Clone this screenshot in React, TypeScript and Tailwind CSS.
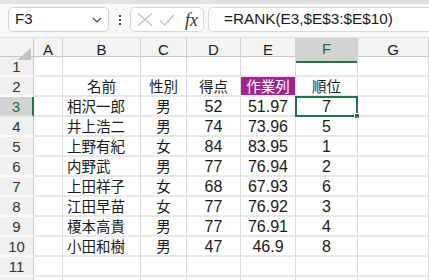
import React from "react";

type Row = {
  name: string;
  sex: string;
  score: string;
  work: string;
  rank: string;
};

const rows: Row[] = [
  { name: "相沢一郎", sex: "男", score: "52", work: "51.97", rank: "7" },
  { name: "井上浩二", sex: "男", score: "74", work: "73.96", rank: "5" },
  { name: "上野有紀", sex: "女", score: "84", work: "83.95", rank: "1" },
  { name: "内野武", sex: "男", score: "77", work: "76.94", rank: "2" },
  { name: "上田祥子", sex: "女", score: "68", work: "67.93", rank: "6" },
  { name: "江田早苗", sex: "女", score: "77", work: "76.92", rank: "3" },
  { name: "榎本高貴", sex: "男", score: "77", work: "76.91", rank: "4" },
  { name: "小田和樹", sex: "男", score: "47", work: "46.9", rank: "8" },
];

const cols = ["A", "B", "C", "D", "E", "F", "G"];

const font = { fontFamily: '"Liberation Sans", "Noto Sans CJK JP", sans-serif' };

const gridCols = "grid grid-cols-[34px_29px_78px_46px_54px_55px_62px_1fr]";

const cell = "h-[20px] pt-[2px] border-r border-b-2 border-r-[#dadada] border-b-[#e8e8e8] flex items-center text-[#1a1a1a]";

const RowHead = ({ n, selected }: { n?: number; selected?: boolean }) => (
  <div
    className={
      "h-[20px] pt-[2px] flex items-center justify-center text-[15px] border-b-2 " +
      (selected
        ? "bg-[#d3d3d3] border-b-[#e4e4e4] border-r-2 border-r-[#217346] text-[#1e6b41]"
        : "bg-[#f0f0f0] border-b-[#fafafa] border-r border-r-[#c8c8c8] text-[#333]")
    }
  >
    {n}
  </div>
);

const Jp = ({ children }: { children: React.ReactNode }) => (
  <span className="text-[14.5px] leading-none">{children}</span>
);

const Num = ({ children }: { children: React.ReactNode }) => (
  <span className="text-[16px] leading-none">{children}</span>
);

export default function App() {
  return (
    <div className="w-[429px] h-[280px] overflow-hidden bg-white" style={font}>
      {/* top strip */}
      <div className="h-[4px] bg-[#e2e2e2]" />

      {/* formula bar */}
      <div className="h-[34px] bg-[#f8f8f8] flex items-start pt-[3px] border-b border-[#e0e0e0]">
        <div className="ml-[8px] w-[101px] h-[25px] bg-white border border-[#d2d2d2] rounded-[5px] flex items-center justify-between pl-[6px] pr-[6px]">
          <span className="text-[15px] text-[#222]">F3</span>
          <svg width="10" height="6" viewBox="0 0 10 6">
            <path d="M1 1 L5 5 L9 1" fill="none" stroke="#444" strokeWidth="1.2" />
          </svg>
        </div>
        <div className="w-[21px] h-[25px] flex flex-col items-center justify-center gap-[2px]">
          <span className="w-[2px] h-[2px] bg-[#444]" />
          <span className="w-[2px] h-[2px] bg-[#444]" />
          <span className="w-[2px] h-[2px] bg-[#444]" />
        </div>
        <div className="w-[74px] h-[25px] bg-white border border-[#d8d8d8] rounded-[5px] flex items-center pl-[6px] gap-[6px]">
          <svg width="16" height="13" viewBox="0 0 16 13">
            <path d="M1 0.5 L15 12.5 M15 0.5 L1 12.5" stroke="#bdbdbd" strokeWidth="1.1" fill="none" />
          </svg>
          <svg width="16" height="12" viewBox="0 0 16 12">
            <path d="M1 6 L5.5 11 L15 1" stroke="#bdbdbd" strokeWidth="1.1" fill="none" />
          </svg>
          <span
            className="text-[18px] italic text-[#333] leading-none ml-[4px]"
            style={{ fontFamily: '"Liberation Serif", "DejaVu Serif", serif' }}
          >
            fx
          </span>
        </div>
        <div className="ml-[4px] flex-1 h-[25px] bg-white border border-[#d8d8d8] border-r-0 rounded-l-[5px] flex items-center pl-[15px]">
          <span className="text-[15.3px] text-[#1a1a1a]">=RANK(E3,$E$3:$E$10)</span>
        </div>
      </div>

      {/* column headers */}
      <div className={gridCols + " h-[19px] bg-[#f3f3f3] border-b border-[#c8c8c8]"}>
        <div className="relative border-r border-[#c8c8c8]">
          <svg className="absolute right-[2px] bottom-[3px]" width="14" height="12" viewBox="0 0 14 12">
            <path d="M14 0 L14 12 L0 12 Z" fill="#c3c3c3" />
          </svg>
        </div>
        {cols.map((c) => (
          <div
            key={c}
            className={
              "flex items-center justify-center text-[15px] border-r border-[#d0d0d0] " +
              (c === "F"
                ? "bg-[#d3d3d3] text-[#1e6b41] border-b-2 border-b-[#217346]"
                : "text-[#1a1a1a]")
            }
          >
            {c}
          </div>
        ))}
      </div>

      {/* rows */}
      <div className={gridCols}>
        {/* row 1 */}
        <RowHead n={1} />
        {cols.map((c) => (
          <div key={"r1" + c} className={cell} />
        ))}

        {/* row 2 */}
        <RowHead n={2} />
        <div className={cell} />
        <div className={cell + " justify-center"}>
          <Jp>名前</Jp>
        </div>
        <div className={cell + " justify-center"}>
          <Jp>性別</Jp>
        </div>
        <div className={cell + " justify-center"}>
          <Jp>得点</Jp>
        </div>
        <div className={cell + " justify-center !bg-[#a0238f] !text-white"}>
          <Jp>作業列</Jp>
        </div>
        <div className={cell + " justify-center"}>
          <Jp>順位</Jp>
        </div>
        <div className={cell} />

        {rows.map((r, i) => (
          <React.Fragment key={r.name}>
            <RowHead n={i + 3} selected={i === 0} />
            <div className={cell} />
            <div className={cell + " pl-[4px]"}>
              <Jp>{r.name}</Jp>
            </div>
            <div className={cell + " justify-center"}>
              <Jp>{r.sex}</Jp>
            </div>
            <div className={cell + " justify-center"}>
              <Num>{r.score}</Num>
            </div>
            <div className={cell + " justify-center"}>
              <Num>{r.work}</Num>
            </div>
            <div className={cell + " justify-center relative"}>
              <Num>{r.rank}</Num>
              {i === 0 && (
                <>
                  <div className="absolute -left-[1px] -top-[1px] -right-[1px] -bottom-[2px] border-2 border-[#217346]" />
                  <div className="absolute -right-[3px] -bottom-[4px] w-[6px] h-[6px] bg-[#217346] border border-white" />
                </>
              )}
            </div>
            <div className={cell} />
          </React.Fragment>
        ))}

        {/* row 11 and the top of row 12 */}
        <RowHead n={11} />
        {cols.map((c) => (
          <div key={"r11" + c} className={cell} />
        ))}
        <RowHead />
        {cols.map((c) => (
          <div key={"r12" + c} className={cell} />
        ))}
      </div>
    </div>
  );
}
